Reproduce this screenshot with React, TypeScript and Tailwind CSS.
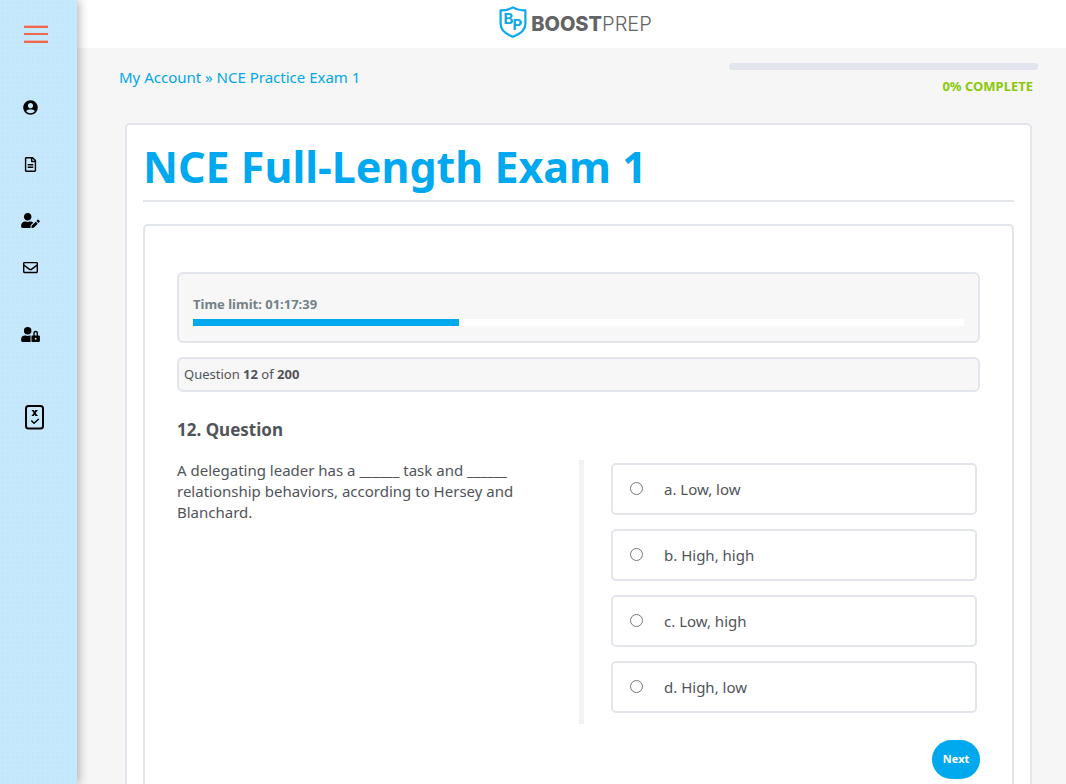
import { useState } from "react";
import { FaUserCircle, FaRegFileAlt, FaUserEdit, FaRegEnvelope, FaUserLock } from "react-icons/fa";

const OPTIONS = [
  { id: "a", text: "Low, low" },
  { id: "b", text: "High, high" },
  { id: "c", text: "Low, high" },
  { id: "d", text: "High, low" },
];

const TIME_USED = 34.5;

function ExamIcon() {
  return (
    <svg viewBox="0 0 19 26" className="h-[26px] w-[19px]" fill="none" stroke="currentColor" aria-hidden>
      <rect x="1" y="2" width="17" height="22.500" rx="2.500" strokeWidth="2" />
      <path d="M6.800 6.500h2.200M10.400 6.500h2.200M6.800 11.500h2.200M10.400 11.500h2.200" strokeWidth="1" />
      <path d="M8 6.500l3.400 5M11.400 6.500l-3.400 5" strokeWidth="1.700" />
      <path d="M6.300 16.500l2.700 2.700 4.800-4.200" strokeWidth="1.500" />
    </svg>
  );
}

const LINKS = [
  { label: "Profile", className: "h-[15px]", icon: <FaUserCircle className="size-[15px]" /> },
  { label: "Courses", className: "mt-[42px] h-[15px]", icon: <FaRegFileAlt className="size-[15px]" /> },
  { label: "Edit account", className: "mt-[41px] h-[15px]", icon: <FaUserEdit className="h-[15px] w-[19px]" /> },
  { label: "Messages", className: "mt-8 h-[15px]", icon: <FaRegEnvelope className="size-[15px]" /> },
  { label: "Privacy", className: "mt-[52px] h-[15px]", icon: <FaUserLock className="h-[15px] w-[19px]" /> },
  { label: "Practice exams", className: "mt-[62px] ml-2 h-[26px]", icon: <ExamIcon /> },
];

function Sidebar() {
  return (
    <aside className="z-10 flex w-[77px] shrink-0 flex-col bg-[#c6e8fc] bg-[radial-gradient(#c0e5fb_1px,transparent_1px)] bg-[size:5px_5px] shadow-[1px_0_10px_rgba(0,0,0,0.35)]">
      <button type="button" aria-label="Toggle menu" className="mt-[25px] ml-6 flex w-6 flex-col gap-[5px]">
        <span className="h-[3px] w-full border-t border-[#d9b8b6] bg-[#f2674f]" />
        <span className="h-[2px] w-full bg-[#f2674f]" />
        <span className="h-[3px] w-full border-t border-[#d9b8b6] bg-[#f2674f]" />
      </button>
      <nav className="mt-[57px] flex w-[61px] flex-col items-center text-black">
        {LINKS.map((l) => (
          <a key={l.label} href="#" aria-label={l.label} className={`flex items-center ${l.className}`}>
            {l.icon}
          </a>
        ))}
      </nav>
    </aside>
  );
}

function Logo() {
  return (
    <a href="#" className="flex items-center gap-1 text-[#636466]">
      <svg viewBox="0 0 28 32" className="h-8 w-7" aria-hidden>
        <path
          d="M14 1.400C10.500 3.400 6 4.400 1.600 4.400V18C1.600 24.500 8 28.500 14 30.800C20 28.500 26.400 24.500 26.400 18V4.400C22 4.400 17.500 3.400 14 1.400Z"
          fill="none"
          stroke="#0aa9ec"
          strokeWidth="2.200"
          strokeLinejoin="round"
        />
        <text x="4.500" y="18" fontFamily="Inter, sans-serif" fontSize="15" fontWeight="700" fill="#0aa9ec">B</text>
        <text x="13.500" y="24" fontFamily="Inter, sans-serif" fontSize="15" fontWeight="700" fill="#0aa9ec">P</text>
      </svg>
      <span className="pt-[3px] font-['Inter',sans-serif] text-[20px] leading-6">
        <span className="font-extrabold">BOOST</span>
        <span className="font-light">PREP</span>
      </span>
    </a>
  );
}

export default function App() {
  const [answer, setAnswer] = useState("");

  return (
    <div className="flex h-screen overflow-hidden bg-[#f6f6f6] font-['Noto_Sans',sans-serif] text-[15px] text-[#50545a]">
      <Sidebar />

      <div className="min-w-0 flex-1 overflow-y-auto [scrollbar-width:none]">
        <header className="flex h-12 items-center justify-center bg-white pb-1 pl-2">
          <Logo />
        </header>

        <div className="flex justify-between pt-[15px] pr-7 pl-[42px]">
          <nav className="pt-0.5 leading-6 text-[#00a8ea]">
            <a href="#">My Account</a> » <a href="#">NCE Practice Exam 1</a>
          </nav>
          <div className="w-[309px]">
            <div className="h-[7px] rounded-full bg-[#e2e5ee]" role="progressbar" aria-valuenow={0} aria-label="Course progress" />
            <p className="mt-1.5 pr-[5px] text-right text-[13px] leading-5 font-bold text-[#8ac809]">0% COMPLETE</p>
          </div>
        </div>

        <main className="mt-[27px] mr-[34px] mb-10 ml-12 rounded-[5px] border-2 border-[#e2e5ec] bg-white px-4 pb-4">
          <h1 className="border-b-2 border-[#e2e6ea] pt-3 pb-1 text-[43px] leading-[59px] font-bold text-[#00a8ef]">
            NCE Full-Length Exam 1
          </h1>

          <section className="mt-[22px] rounded-[5px] border-2 border-[#e2e5ec] px-8 pt-[46px] pb-12">
            <div className="rounded-md border-2 border-[#e2e5ec] bg-[#f7f7f7] px-3.5 pt-5 pb-[15px]">
              <p className="text-[13px] leading-5 font-bold text-[#728188]">Time limit: 01:17:39</p>
              <div className="mt-[5px] h-[7px] bg-white">
                <div className="h-full bg-[#00a9ee]" style={{ width: `${TIME_USED}%` }} />
              </div>
            </div>

            <p className="mt-3.5 rounded-md border-2 border-[#e2e5ec] bg-[#f7f7f7] px-[5px] py-[5px] text-[13px] leading-[21px]">
              Question <b>12</b> of <b>200</b>
            </p>

            <h2 className="mt-[26px] text-[17px] leading-6 font-bold">12. Question</h2>

            <div className="mt-[18px] flex">
              <p className="flex-1 pr-12 leading-[21px]">
                A delegating leader has a ______ task and ______ relationship behaviors, according to Hersey and Blanchard.
              </p>
              <fieldset className="flex w-[401px] flex-col gap-3.5 border-l-[5px] border-[#f3f3f3] pt-[3px] pr-[3px] pb-[11px] pl-[27px]">
                {OPTIONS.map((o) => (
                  <label key={o.id} className="flex h-[52px] items-center gap-[21px] rounded-[5px] border-2 border-[#e2e5ec] px-[17px]">
                    <input
                      type="radio"
                      name="answer"
                      value={o.id}
                      checked={answer === o.id}
                      onChange={() => setAnswer(o.id)}
                      className="mb-0.5 size-[13px]"
                    />
                    <span>
                      {o.id}. {o.text}
                    </span>
                  </label>
                ))}
              </fieldset>
            </div>

            <div className="mt-4 flex justify-end">
              <button type="button" className="h-[39px] w-12 rounded-full bg-[#00a9ee] font-['Open_Sans',sans-serif] text-[11px] font-bold text-white">
                Next
              </button>
            </div>
          </section>
        </main>
      </div>
    </div>
  );
}
